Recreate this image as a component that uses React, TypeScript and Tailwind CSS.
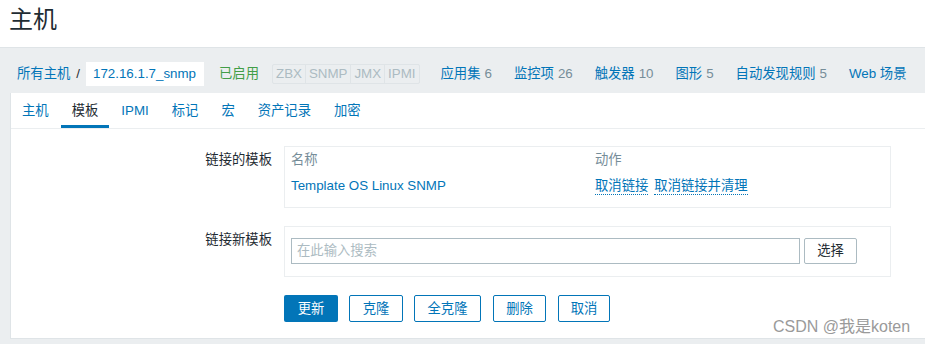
import React from "react";

const font = { fontFamily: '"Liberation Sans", Arial, "Noto Sans CJK SC", sans-serif' };

const navLinks = [
  { label: "应用集", count: "6" },
  { label: "监控项", count: "26" },
  { label: "触发器", count: "10" },
  { label: "图形", count: "5" },
  { label: "自动发现规则", count: "5" },
  { label: "Web 场景", count: "" },
];

const tabs = ["主机", "模板", "IPMI", "标记", "宏", "资产记录", "加密"];

const App = () => {
  return (
    <div className="relative h-[344px] w-[925px] overflow-hidden bg-[#ebeef0] text-[13.33px] text-[#1f2c33]" style={font}>
      {/* header */}
      <div className="h-[48px] border-b border-[#dfe4e7] bg-white pl-[9px] pt-[4px]">
        <h1 className="text-[24px] leading-[32px] text-[#1f2c33]">主机</h1>
      </div>

      {/* breadcrumb / host nav */}
      <div className="flex h-[45px] items-start pt-[14px]">
        <div className="flex h-[24px] items-center whitespace-nowrap">
          <a className="ml-[17px] text-[#0275b8]">所有主机</a>
          <span className="mx-[6px] text-[#1f2c33]">/</span>
          <span className="flex h-[24px] w-[118px] items-center bg-white px-[7px] text-[#0275b8]">172.16.1.7_snmp</span>
          <span className="ml-[15px] text-[#429e47]">已启用</span>
          <span className="ml-[13px] flex h-[20px] items-center rounded-[2px] border border-[#dfe4e7] text-[#acbbc2]">
            <span className="px-[3px]">ZBX</span>
            <span className="border-l border-[#dfe4e7] px-[3px]">SNMP</span>
            <span className="border-l border-[#dfe4e7] px-[3px]">JMX</span>
            <span className="border-l border-[#dfe4e7] px-[3px]">IPMI</span>
          </span>
          <div className="ml-[21px] flex gap-[22px]">
            {navLinks.map((n) => (
              <span key={n.label}>
                <a className="text-[#0275b8]">{n.label}</a>
                {n.count && <span className="ml-[4px] text-[#768d99]">{n.count}</span>}
              </span>
            ))}
          </div>
        </div>
      </div>

      {/* main panel */}
      <div className="ml-[10px] h-[246px] border-b border-l border-[#dfe4e7] bg-white">
        <div className="flex h-[36px] border-b border-[#ebeef0]">
          {tabs.map((t, i) => (
            <div
              key={t}
              className={
                "mr-[1px] flex items-center border-b-[3px] px-[11px] pt-[3px] " +
                (i === 1 ? "border-[#0275b8] text-[#1f2c33]" : "border-transparent text-[#0275b8]")
              }
            >
              {t}
            </div>
          ))}
        </div>

        <div className="pt-[17px]">
          {/* linked templates */}
          <div className="flex">
            <div className="w-[273px] pr-[12px] pt-[5px] text-right leading-[18px]">链接的模板</div>
            <div className="w-[607px] border border-[#ebeef0] px-[6px] pb-[12px] pt-[4px]">
              <div className="flex h-[18px] items-center text-[#768d99]">
                <div className="w-[304px]">名称</div>
                <div>动作</div>
              </div>
              <div className="mt-[8px] flex h-[18px] items-center">
                <div className="w-[304px] text-[#0275b8]">Template OS Linux SNMP</div>
                <div className="flex gap-[6px] text-[#0275b8]">
                  <a className="inline-block border-b border-dotted border-[#0275b8] leading-[17px]">取消链接</a>
                  <a className="inline-block border-b border-dotted border-[#0275b8] leading-[17px]">取消链接并清理</a>
                </div>
              </div>
            </div>
          </div>

          {/* link new template */}
          <div className="mt-[18px] flex">
            <div className="w-[273px] pr-[12px] pt-[5px] text-right leading-[18px]">链接新模板</div>
            <div className="flex w-[607px] items-center gap-[4px] border border-[#ebeef0] px-[6px] pb-[12px] pt-[11px]">
              <div className="flex h-[26px] w-[509px] items-center border border-[#acbbc2] px-[5px] text-[#acbbc2]">
                在此输入搜索
              </div>
              <button className="h-[26px] w-[53px] rounded-[2px] border border-[#acbbc2] bg-white text-[#1f2c33]">
                选择
              </button>
            </div>
          </div>

          {/* actions */}
          <div className="ml-[273px] mt-[18px] flex">
            <button className="h-[27px] w-[54px] rounded-[2px] bg-[#0275b8] text-white">更新</button>
            <button className="ml-[11px] h-[27px] w-[54px] rounded-[2px] border border-[#0275b8] bg-white text-[#0275b8]">克隆</button>
            <button className="ml-[11px] h-[27px] w-[67px] rounded-[2px] border border-[#0275b8] bg-white text-[#0275b8]">全克隆</button>
            <button className="ml-[12px] h-[27px] w-[53px] rounded-[2px] border border-[#0275b8] bg-white text-[#0275b8]">删除</button>
            <button className="ml-[12px] h-[27px] w-[52px] rounded-[2px] border border-[#0275b8] bg-white text-[#0275b8]">取消</button>
          </div>
        </div>
      </div>

      {/* watermark */}
      <div className="absolute left-[773px] top-[317px] text-[16px] leading-[20px] text-[#9a9a9a]">CSDN @我是koten</div>
    </div>
  );
};

export default App;
